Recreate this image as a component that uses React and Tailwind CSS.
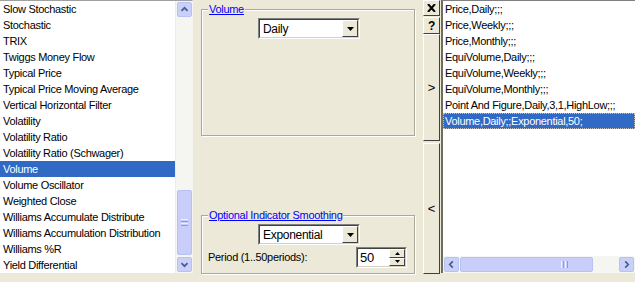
import React from "react";

const leftItems = [
  "Slow Stochastic",
  "Stochastic",
  "TRIX",
  "Twiggs Money Flow",
  "Typical Price",
  "Typical Price Moving Average",
  "Vertical Horizontal Filter",
  "Volatility",
  "Volatility Ratio",
  "Volatility Ratio (Schwager)",
  "Volume",
  "Volume Oscillator",
  "Weighted Close",
  "Williams Accumulate Distribute",
  "Williams Accumulation Distribution",
  "Williams %R",
  "Yield Differential",
];

const rightItems = [
  "Price,Daily;;;",
  "Price,Weekly;;;",
  "Price,Monthly;;;",
  "EquiVolume,Daily;;;",
  "EquiVolume,Weekly;;;",
  "EquiVolume,Monthly;;;",
  "Point And Figure,Daily,3,1,HighLow;;;",
  "Volume,Daily;;Exponential,50;",
];

function Chevron({ dir }) {
  const paths = {
    up: "M4 9 L7.5 5.5 L11 9",
    down: "M4 6 L7.5 9.5 L11 6",
    left: "M9 4 L5.5 7.5 L9 11",
    right: "M6 4 L9.5 7.5 L6 11",
  };
  return (
    <svg width="15" height="15" viewBox="0 0 15 15">
      <path d={paths[dir]} fill="none" stroke="#4d5c8c" strokeWidth="2" />
    </svg>
  );
}

function ScrollBtn({ dir }) {
  return (
    <div className="w-[15px] h-[15px] rounded-[2px] border border-[#b6c3ee] bg-[#c9d1fb] flex items-center justify-center">
      <Chevron dir={dir} />
    </div>
  );
}

function Combo({ value }) {
  return (
    <div className="w-[102px] h-[21px] bg-white border border-t-[#808080] border-l-[#808080] border-b-white border-r-white">
      <div className="h-full border border-t-[#404040] border-l-[#404040] border-b-[#d4d0c8] border-r-[#d4d0c8] flex items-center">
        <div className="flex-1 pl-[3px] text-black text-[12px]">{value}</div>
        <div className="w-[16px] h-full bg-[#ECE9D8] border border-t-white border-l-white border-b-[#404040] border-r-[#404040] flex items-center justify-center">
          <svg width="7" height="4" viewBox="0 0 7 4">
            <path d="M0 0 H7 L3.5 4 Z" fill="black" />
          </svg>
        </div>
      </div>
    </div>
  );
}

function ClassicBtn({ className, children }) {
  return (
    <div
      className={
        "w-[17px] bg-[#ECE9D8] border border-t-white border-l-white border-b-[#404040] border-r-[#404040] flex items-center justify-center font-bold text-[12px] text-black " +
        className
      }
    >
      {children}
    </div>
  );
}

export default function App() {
  return (
    <div className="w-[635px] h-[282px] bg-[#ECE9D8] flex items-start font-['Liberation_Sans',Arial,sans-serif] text-[11px] tracking-[-0.3px] leading-none text-black overflow-hidden">
      {/* Left list */}
      <div className="w-[193px] h-[273px] bg-white flex border-t border-t-[#a0a0a0] border-r border-r-[#f4f4f0]">
        <div className="flex-1 flex flex-col">
          {leftItems.map((t) => (
            <div
              key={t}
              className={
                "h-[16px] shrink-0 flex items-center pl-[3px] whitespace-nowrap " +
                (t === "Volume" ? "bg-[#316ac5] text-white" : "")
              }
            >
              {t}
            </div>
          ))}
        </div>
        <div className="w-[17px] bg-[#f5f5f1] flex flex-col items-center py-[1px] border-l border-l-[#eeede5]">
          <ScrollBtn dir="up" />
          <div className="flex-1 w-full flex flex-col items-center">
            <div className="flex-1" />
            <div className="w-[15px] h-[65px] rounded-[2px] border border-[#b6c3ee] bg-[#c9cdfa] flex items-center justify-center mb-[2px]">
              <div className="flex flex-col gap-[1px]">
                <div className="w-[7px] h-[1px] bg-[#eef0ff]" />
                <div className="w-[7px] h-[1px] bg-[#8c97e0]" />
                <div className="w-[7px] h-[1px] bg-[#eef0ff]" />
                <div className="w-[7px] h-[1px] bg-[#8c97e0]" />
              </div>
            </div>
          </div>
          <ScrollBtn dir="down" />
        </div>
      </div>

      {/* Middle panel */}
      <div className="w-[230px] h-[274px] flex flex-col px-[8px]">
        <div className="relative mt-[9px] h-[127px] border border-[#aca899] shadow-[inset_1px_1px_0_white,1px_1px_0_white]">
          <span className="absolute -top-[6px] left-[6px] bg-[#ECE9D8] px-[1px] text-[#0000ff] underline">
            Volume
          </span>
          <div className="ml-[56px] mt-[8px]">
            <Combo value="Daily" />
          </div>
        </div>
        <div className="relative mt-auto h-[59px] border border-[#aca899] shadow-[inset_1px_1px_0_white,1px_1px_0_white]">
          <span className="absolute -top-[6px] left-[6px] bg-[#ECE9D8] px-[1px] text-[#0000ff] underline">
            Optional Indicator Smoothing
          </span>
          <div className="ml-[56px] mt-[8px]">
            <Combo value="Exponential" />
          </div>
          <div className="flex items-center justify-between pl-[6px] pr-[7px] mt-[2px]">
            <span>Period (1..50periods):</span>
            <div className="w-[51px] h-[21px] bg-white border border-t-[#808080] border-l-[#808080] border-b-white border-r-white">
              <div className="h-full border border-t-[#404040] border-l-[#404040] border-b-[#d4d0c8] border-r-[#d4d0c8] flex">
                <div className="flex-1 flex items-center pl-[2px] text-[13px]">50</div>
                <div className="w-[16px] flex flex-col">
                  <div className="flex-1 bg-[#ECE9D8] border border-t-white border-l-white border-b-[#404040] border-r-[#404040] flex items-center justify-center">
                    <svg width="5" height="3" viewBox="0 0 5 3"><path d="M0 3 H5 L2.5 0 Z" fill="black" /></svg>
                  </div>
                  <div className="flex-1 bg-[#ECE9D8] border border-t-white border-l-white border-b-[#404040] border-r-[#404040] flex items-center justify-center">
                    <svg width="5" height="3" viewBox="0 0 5 3"><path d="M0 0 H5 L2.5 3 Z" fill="black" /></svg>
                  </div>
                </div>
              </div>
            </div>
          </div>
        </div>
      </div>

      {/* Buttons column */}
      <div className="w-[18px] h-[274px] flex flex-col">
        <ClassicBtn className="h-[16px]">
          <svg width="9" height="8" viewBox="0 0 9 8"><path d="M1 0 L8 8 M8 0 L1 8" stroke="black" strokeWidth="2" /></svg>
        </ClassicBtn>
        <ClassicBtn className="h-[17px] mt-[1px]">?</ClassicBtn>
        <ClassicBtn className="h-[107px]">
          <span className="font-normal text-[13px]">&gt;</span>
        </ClassicBtn>
        <ClassicBtn className="flex-1 mt-[2px]">
          <span className="font-normal text-[13px]">&lt;</span>
        </ClassicBtn>
      </div>

      {/* Right list */}
      <div className="w-[194px] h-[273px] bg-white flex flex-col border-l-2 border-l-[#6f6d60] border-t border-t-[#808080]">
        <div className="flex-1 flex flex-col">
          {rightItems.map((t, i) => (
            <div
              key={t}
              className={
                "h-[16px] shrink-0 flex items-center pl-[2px] whitespace-nowrap " +
                (i === rightItems.length - 1
                  ? "bg-[#316ac5] text-white outline outline-1 outline-dotted outline-offset-[-1px] outline-[#c0c0c0]"
                  : "")
              }
            >
              {t}
            </div>
          ))}
        </div>
        <div className="h-[17px] bg-[#f5f5f1] flex items-center px-[1px]">
          <ScrollBtn dir="left" />
          <div className="w-[133px] h-[15px] ml-[1px] rounded-[2px] border border-[#b6c3ee] bg-[#c9cdfa] flex items-center justify-end pr-[24px]">
            <div className="flex gap-[1px]">
              <div className="w-[1px] h-[7px] bg-[#eef0ff]" />
              <div className="w-[1px] h-[7px] bg-[#8c97e0]" />
              <div className="w-[1px] h-[7px] bg-[#eef0ff]" />
              <div className="w-[1px] h-[7px] bg-[#8c97e0]" />
            </div>
          </div>
          <div className="flex-1" />
          <ScrollBtn dir="right" />
        </div>
      </div>
    </div>
  );
}
